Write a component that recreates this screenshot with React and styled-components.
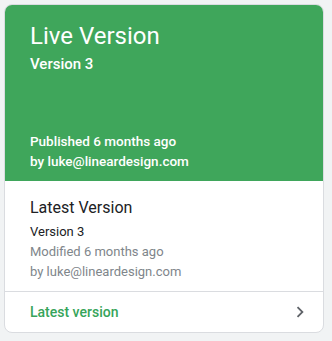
import React from 'react';
import styled, { createGlobalStyle } from 'styled-components';

const GlobalStyle = createGlobalStyle`
  body {
    margin: 0;
    background: #f1f3f4;
    font-family: Roboto, "Liberation Sans", Arial, sans-serif;
  }
`;

const Page = styled.div`
  padding: 4px;
`;

const Card = styled.div`
  width: 320px;
  box-sizing: border-box;
  border: 1px solid #dadce0;
  border-radius: 8px;
  background: #fff;
  overflow: hidden;
`;

const Header = styled.div`
  height: 177px;
  box-sizing: border-box;
  margin: -1px -1px 0;
  padding: 16px 26px 10px;
  background: #3fa65b;
  color: #fff;
  display: flex;
  flex-direction: column;
  justify-content: space-between;
`;

const Title = styled.div`
  font-size: ${p => p.size}px;
  line-height: ${p => p.lh}px;
  font-weight: ${p => p.weight || 400};
  color: ${p => p.color || 'inherit'};
  margin-top: ${p => p.mt || 0}px;
`;

const Line = styled.div`
  font-size: ${p => p.size || 13}px;
  line-height: 20px;
  font-weight: ${p => p.weight || 400};
  color: ${p => p.color || 'inherit'};
  margin-top: ${p => p.mt || 0}px;
`;

const Body = styled.div`
  padding: 15px 25px 9px;
  border-bottom: 1px solid #dadce0;
`;

const Footer = styled.div`
  height: 40px;
  display: flex;
  align-items: center;
  justify-content: space-between;
  padding: 0 12px 0 25px;
  font-size: 14px;
  font-weight: 500;
  color: #36a45a;
`;

const Chevron = () => (
  <svg width="22" height="22" viewBox="0 0 24 24" fill="#5f6368">
    <path d="M10 6L8.59 7.41 13.17 12l-4.58 4.59L10 18l6-6z" />
  </svg>
);

export default function App() {
  return (
    <Page>
      <GlobalStyle />
      <Card>
        <Header>
          <div>
            <Title size={24} lh={32}>Live Version</Title>
            <Title size={15} lh={20} weight={500} mt={2}>Version 3</Title>
          </div>
          <div>
            <Line size={13.5} weight={500}>Published 6 months ago</Line>
            <Line size={13.5} weight={500}>by luke@lineardesign.com</Line>
          </div>
        </Header>
        <Body>
          <Title size={16} lh={24} color="#202124">Latest Version</Title>
          <Line color="#202124" mt={2}>Version 3</Line>
          <Line color="#80868b">Modified 6 months ago</Line>
          <Line color="#80868b">by luke@lineardesign.com</Line>
        </Body>
        <Footer>
          <span>Latest version</span>
          <Chevron />
        </Footer>
      </Card>
    </Page>
  );
}
